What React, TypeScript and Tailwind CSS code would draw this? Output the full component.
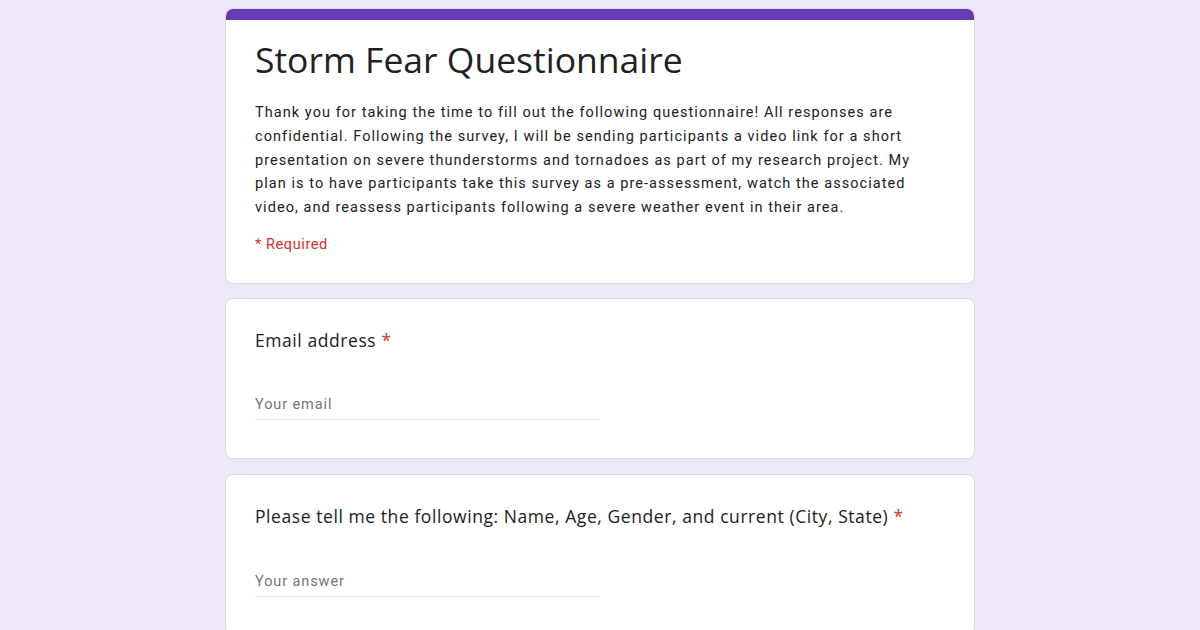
import React from "react";

const sans = { fontFamily: "Roboto, 'Liberation Sans', sans-serif" };

function Question({ title, placeholder, gap, extra }: { title: string; placeholder: string; gap: string; extra?: string }) {
  return (
    <div className={`bg-white border border-[#dadce0] rounded-[8px] px-[29px] pt-[29px] pb-[38px] ${extra ?? ""}`}>
      <div className="text-[17.5px] leading-[24px] text-[#202124] tracking-[0.57px]" style={{ fontFamily: "'Open Sans', Roboto, sans-serif" }}>
        {title} <span className="text-[#d93025]">*</span>
      </div>
      <div className={`${gap} w-[345px] border-b border-[#e8e8e8] pb-[4px]`}>
        <div className="text-[14.5px] leading-[20px] text-[#70757a] tracking-[0.9px]" style={sans}>
          {placeholder}
        </div>
      </div>
    </div>
  );
}

export default function App() {
  return (
    <div className="w-[1200px] h-[630px] overflow-hidden bg-[#ede7f6]">
      <div className="w-[750px] mx-auto pt-[8px] flex flex-col gap-[14px]">
        <div className="bg-white border border-[#dadce0] rounded-[8px] overflow-hidden">
          <div className="h-[11px] bg-[#673ab7]" />
          <div className="px-[29px] pt-[19px] pb-[28px]">
            <h1 className="text-[35.5px] leading-[40px] text-[#202124]" style={{ fontFamily: "'Open Sans', Roboto, sans-serif" }}>
              Storm Fear Questionnaire
            </h1>
            <p className="mt-[22px] text-[14.5px] leading-[23.75px] text-[#202124] tracking-[1.06px]" style={sans}>
              Thank you for taking the time to fill out the following questionnaire! All responses are confidential. Following the survey, I will be sending participants a video link for a short presentation on severe thunderstorms and tornadoes as part of my research project. My plan is to have participants take this survey as a pre-assessment, watch the associated video, and reassess participants following a severe weather event in their area.
            </p>
            <div className="mt-[15px] text-[14.5px] leading-[20px] text-[#d93025] tracking-[0.6px]" style={sans}>
              * Required
            </div>
          </div>
        </div>
        <Question title="Email address" placeholder="Your email" gap="mt-[43px]" />
        <Question title="Please tell me the following: Name, Age, Gender, and current (City, State)" placeholder="Your answer" gap="mt-[44px]" extra="mt-[1px]" />
      </div>
    </div>
  );
}
